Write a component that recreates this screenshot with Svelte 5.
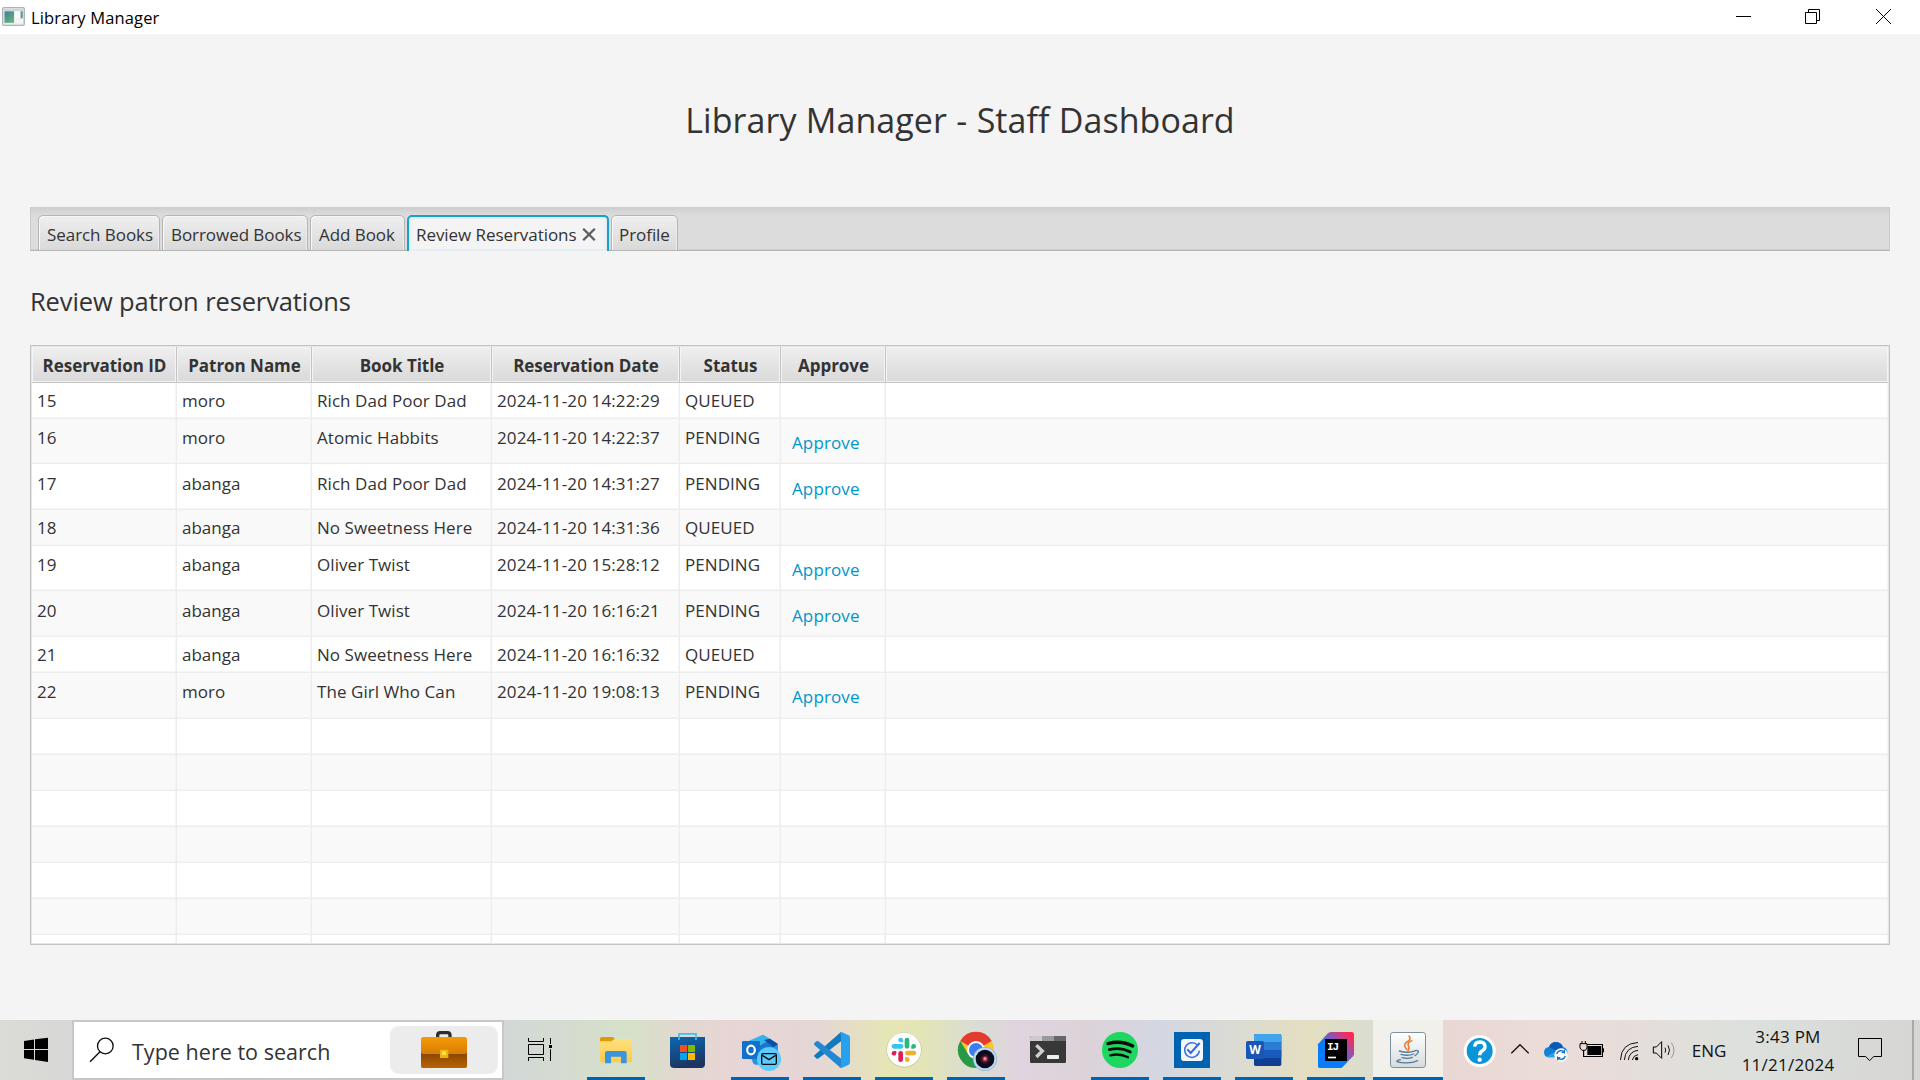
<script>
  const tabs = [
    { label: 'Search Books', cls: 't1' },
    { label: 'Borrowed Books', cls: 't2' },
    { label: 'Add Book', cls: 't3' },
    { label: 'Review Reservations', cls: 't4', active: true },
    { label: 'Profile', cls: 't5' },
  ];
  const columns = ['Reservation ID', 'Patron Name', 'Book Title', 'Reservation Date', 'Status', 'Approve'];
  const rows = [
    ['15', 'moro', 'Rich Dad Poor Dad', '2024-11-20 14:22:29', 'QUEUED'],
    ['16', 'moro', 'Atomic Habbits', '2024-11-20 14:22:37', 'PENDING'],
    ['17', 'abanga', 'Rich Dad Poor Dad', '2024-11-20 14:31:27', 'PENDING'],
    ['18', 'abanga', 'No Sweetness Here', '2024-11-20 14:31:36', 'QUEUED'],
    ['19', 'abanga', 'Oliver Twist', '2024-11-20 15:28:12', 'PENDING'],
    ['20', 'abanga', 'Oliver Twist', '2024-11-20 16:16:21', 'PENDING'],
    ['21', 'abanga', 'No Sweetness Here', '2024-11-20 16:16:32', 'QUEUED'],
    ['22', 'moro', 'The Girl Who Can', '2024-11-20 19:08:13', 'PENDING'],
  ];
  const rowClass = (i) => {
    if (rows[i][4] !== 'PENDING') return '';
    if (i === rows.length - 1) return 'tall end';
    return i > 0 && rows[i - 1][4] === 'PENDING' ? 'tall taller' : 'tall';
  };
  const blanks = [0, 1, 2, 3, 4, 5, 6];
</script>

<div class="screen">
  <header class="titlebar">
    <svg class="appicon" width="24" height="20" viewBox="0 0 24 20">
      <defs>
        <linearGradient id="appg" x1="0" y1="0" x2="0.6" y2="1"><stop offset="0" stop-color="#3f7f9c" /><stop offset="1" stop-color="#63b07f" /></linearGradient>
      </defs>
      <rect x="0.7" y="0.7" width="21.6" height="17.6" rx="1.2" fill="#eceef0" stroke="#adb3b8" stroke-width="1.3" />
      <rect x="2" y="2" width="19" height="2" fill="#cfd6da" />
      <rect x="2.5" y="4.3" width="9.5" height="11.5" fill="url(#appg)" />
      <rect x="13" y="4.3" width="5" height="7" fill="#fafafa" />
      <rect x="18.6" y="4.3" width="2.2" height="7" fill="#5c9b92" />
      <rect x="13" y="12" width="8" height="4" fill="#f4f4f4" />
    </svg>
    <span class="apptitle">Library Manager</span>
    <div class="winbtns">
      <svg width="70" height="34" viewBox="0 0 70 34"><path d="M26 16.5H41" stroke="#000" fill="none" /></svg>
      <svg width="70" height="34" viewBox="0 0 70 34"><path d="M25.5 12.5h11v11h-11zM28.5 12.5v-3h11v11h-3" stroke="#000" fill="none" /></svg>
      <svg width="70" height="34" viewBox="0 0 70 34"><path d="M26 9L41 24M41 9L26 24" stroke="#000" fill="none" /></svg>
    </div>
  </header>

  <main>
    <h1><span>Library Manager - Staff Dashboard</span></h1>
    <nav class="tabs">
      {#each tabs as t}
        <div class="tab {t.cls}" class:active={t.active}>
          <span>{t.label}</span>
          {#if t.active}
            <svg width="14" height="13" viewBox="0 0 14 13"><path d="M1.2 0.8L12.8 12.2M12.8 0.8L1.2 12.2" stroke="#5e5e5e" stroke-width="2.3" fill="none" /></svg>
          {/if}
        </div>
      {/each}
    </nav>
    <h2>Review patron reservations</h2>

    <div class="table">
      <div class="row head">
        {#each columns as c}<div class="hc">{c}</div>{/each}
        <div class="hc"></div>
      </div>
      <div class="body">
        {#each rows as r, i}
          <div class="row {rowClass(i)}" class:odd={i % 2 === 1}>
            {#each r as v, k}<div class="c k{k}">{v}</div>{/each}
            <div class="c link">{#if r[4] === 'PENDING'}<span>Approve</span>{/if}</div>
            <div class="c"></div>
          </div>
        {/each}
        {#each blanks as b}
          <div class="row" class:odd={b % 2 === 1}>
            {#each columns as _}<div class="c"></div>{/each}
            <div class="c"></div>
          </div>
        {/each}
      </div>
    </div>
  </main>

  <!-- Taskbar icons are drawn on a grid of three units to the pixel. -->
  <footer class="taskbar">
    <svg width="72" height="60" viewBox="0 0 216 180">
      <path d="M72 63L102 58.500V87H72zM105 58L144 53V87H105zM72 90H102V119L72 114.500zM105 90H144V126L105 120z" fill="#000" />
    </svg>

    <div class="search">
      <svg width="54" height="56" viewBox="0 0 162 168">
        <circle cx="94" cy="72" r="23.500" fill="none" stroke="#111" stroke-width="4" />
        <path d="M78 89L48 119" stroke="#111" stroke-width="4.200" fill="none" />
      </svg>
      <span>Type here to search</span>
      <div class="pill">
        <svg width="108" height="48" viewBox="0 0 324 144">
          <defs>
            <linearGradient id="bc1" x1="0" y1="0" x2="0" y2="1"><stop offset="0" stop-color="#f79a08" /><stop offset="1" stop-color="#d77c05" /></linearGradient>
            <linearGradient id="bc2" x1="0" y1="0" x2="0" y2="1"><stop offset="0" stop-color="#8f4a02" /><stop offset="0.5" stop-color="#8f4a02" /><stop offset="1" stop-color="#b86504" /></linearGradient>
          </defs>
          <path d="M143 34V28Q143 20 151 20H172Q180 20 180 28V34" stroke="#2d2d2f" stroke-width="10" fill="none" />
          <rect x="93" y="50" width="138" height="76" rx="5" fill="url(#bc2)" />
          <path d="M93 40Q93 33 100 33H224Q231 33 231 40V78Q231 84 225 84H99Q93 84 93 78z" fill="url(#bc1)" />
          <rect x="150" y="71" width="25" height="25" fill="#efb608" />
          <rect x="156" y="76" width="12" height="11" fill="#ffe34d" />
        </svg>
      </div>
    </div>

    <svg class="taskview" width="72" height="60" viewBox="0 0 216 180">
      <path d="M73.500 54V64.500H118.500V54M73.500 73.500H118.500V103.500H73.500zM73.500 123V112.500H118.500V123M139.500 54V72M139.500 88V123" fill="none" stroke="#000" stroke-width="3" />
      <rect x="135" y="75" width="9" height="9" fill="#000" />
    </svg>

    <div class="app run">
      <svg width="72" height="60" viewBox="0 0 216 180">
        <defs><linearGradient id="fo" x1="0" y1="0" x2="0" y2="1"><stop offset="0" stop-color="#ffe07e" /><stop offset="1" stop-color="#fbcb4c" /></linearGradient></defs>
        <path d="M60 56Q60 51 65 51H97Q100 51 102 54L106 60L98 66H60z" fill="#dd9c05" />
        <path d="M60 64H95L102 58H152Q156 58 156 62V122Q156 127 151 127H65Q60 127 60 122z" fill="url(#fo)" />
        <path d="M75 99Q75 93 81 93H134Q140 93 140 99V130H123V110H93V130H75z" fill="#3c94de" />
      </svg>
    </div>
    <div class="app">
      <svg width="72" height="60" viewBox="0 0 216 180">
        <defs><linearGradient id="st" x1="0" y1="0" x2="0.3" y2="1"><stop offset="0" stop-color="#0a68b4" /><stop offset="1" stop-color="#1d3560" /></linearGradient></defs>
        <path d="M54 51H159V132Q159 144 147 144H66Q54 144 54 132z" fill="url(#st)" />
        <path d="M81 60V41.500H132V60" fill="none" stroke="#32c5f4" stroke-width="5" />
        <rect x="84" y="75" width="21" height="21" fill="#f25022" /><rect x="108" y="75" width="21" height="21" fill="#7fba00" />
        <rect x="84" y="99" width="21" height="21" fill="#00a4ef" /><rect x="108" y="99" width="21" height="21" fill="#ffb900" />
      </svg>
    </div>
    <div class="app run">
      <svg width="72" height="60" viewBox="0 0 216 180">
        <path d="M75 66L117 45L161 72V118H75z" fill="#1a76c9" />
        <path d="M75 62L117 44L140 58L96 84z" fill="#35b3ee" />
        <path d="M120 60L138 56L161 71L150 82z" fill="#0b4fa3" />
        <path d="M84 116L130 92L161 74V125Q161 134 150 134H98Q84 134 84 116z" fill="#2793de" />
        <rect x="54" y="63" width="54" height="54" rx="4" fill="#1170cc" />
        <ellipse cx="81" cy="90" rx="11.500" ry="13" fill="none" stroke="#fff" stroke-width="6.500" />
        <circle cx="135" cy="117" r="36" fill="#5ccbff" />
        <rect x="113" y="101" width="44" height="32" rx="4" fill="none" stroke="#111" stroke-width="4" />
        <path d="M115 106L135 119L155 106" fill="none" stroke="#111" stroke-width="4" />
      </svg>
    </div>
    <div class="app run">
      <svg width="72" height="60" viewBox="0 0 216 180">
        <path d="M54 108L62 116Q66 117 69 114L140 60L135 36L56 105Q54 107 54 108z" fill="#1279be" />
        <path d="M54 72Q54 70 56 68L62 63Q66 62 69 65L137 117V144Q133 144 128 139L56 76Q54 74 54 72z" fill="#2388d1" />
        <path d="M128 41Q133 35 138 37L158 46Q162 48 162 53V127Q162 132 158 134L138 143Q132 145 128 139Q135 143 135 135V45Q135 37 128 41z" fill="#27a0ee" />
      </svg>
    </div>
    <div class="app run">
      <svg width="72" height="60" viewBox="0 0 216 180">
        <circle cx="108" cy="90" r="53" fill="#c9c9a8" /><circle cx="108" cy="89" r="51" fill="#fdfdfd" />
        <g stroke-width="14" stroke-linecap="round" fill="none">
          <path d="M78 79H99" stroke="#36c5f0" /><path d="M117 60V79" stroke="#2eb67d" />
          <path d="M118 99H138" stroke="#ecb22e" /><path d="M98 100V119" stroke="#e01e5a" />
        </g>
        <path d="M91 60A7 7 0 0 1 105 60V67H98A7 7 0 0 1 91 60z" fill="#36c5f0" />
        <path d="M130 86V79A7 7 0 1 1 137 86z" fill="#2eb67d" />
        <path d="M111 112H118A7 7 0 1 1 111 119z" fill="#ecb22e" />
        <path d="M85 93V100A7 7 0 1 1 78 93z" fill="#e01e5a" />
      </svg>
    </div>
    <div class="app run">
      <svg width="72" height="60" viewBox="0 0 216 180">
        <circle cx="108" cy="90" r="54" fill="#fdc629" />
        <path d="M108 90L61 63A54 54 0 0 1 155 63z" fill="#e33b2e" />
        <path d="M61 63A54 54 0 0 0 108 144L131 103L85 103z" fill="#269a48" />
        <circle cx="108" cy="90" r="27" fill="#fff" /><circle cx="108" cy="90" r="21" fill="#3b7ded" />
        <circle cx="135" cy="117" r="36" fill="#8fb2d0" /><circle cx="135" cy="117" r="34" fill="#bcd9f3" /><circle cx="135" cy="117" r="28" fill="#0b0b1c" />
        <circle cx="135" cy="117" r="15" fill="#2b1233" /><circle cx="135" cy="117" r="8" fill="#b43557" /><circle cx="135" cy="116" r="4" fill="#ff9a5c" />
      </svg>
    </div>
    <div class="app">
      <svg width="72" height="60" viewBox="0 0 216 180">
        <rect x="54" y="48" width="108" height="81" rx="4" fill="#383838" />
        <path d="M54 63V52Q54 48 58 48H90V63z" fill="#cbcbcb" /><rect x="90" y="48" width="36" height="15" fill="#999" /><path d="M126 48H158Q162 48 162 52V63H126z" fill="#666" />
        <path d="M73 76L91 93L73 111" fill="none" stroke="#cfcfcf" stroke-width="10" />
        <rect x="105" y="105" width="36" height="12" rx="2" fill="#efefef" />
      </svg>
    </div>
    <div class="app run">
      <svg width="72" height="60" viewBox="0 0 216 180">
        <circle cx="108" cy="90" r="54" fill="#1ed760" />
        <g fill="none" stroke="#0a0a0a" stroke-linecap="round"><path d="M72 71Q112 60 146 78" stroke-width="10" /><path d="M76 89Q110 80 139 96" stroke-width="8.500" /><path d="M79 106Q108 99 132 112" stroke-width="7" /></g>
      </svg>
    </div>
    <div class="app run">
      <svg width="72" height="60" viewBox="0 0 216 180">
        <rect x="54" y="36" width="108" height="108" fill="#0063b1" />
        <rect x="75" y="57" width="66" height="66" rx="10" fill="#f4f6fa" />
        <path d="M125 76A22 22 0 1 0 130 92" fill="none" stroke="#3b74e0" stroke-width="4.500" />
        <path d="M94 88L104 99L131 69" fill="none" stroke="#2f6be0" stroke-width="6" />
      </svg>
    </div>
    <div class="app run">
      <svg width="72" height="60" viewBox="0 0 216 180">
        <rect x="78" y="42" width="82" height="96" rx="5" fill="#103f91" />
        <path d="M78 66V47Q78 42 83 42H155Q160 42 160 47V66z" fill="#41a5ee" />
        <rect x="78" y="66" width="82" height="24" fill="#2b7cd3" /><rect x="78" y="90" width="82" height="24" fill="#185abd" />
        <rect x="54" y="63" width="54" height="54" rx="5" fill="#1b56b5" />
        <text x="81" y="102" text-anchor="middle" class="wordmark">W</text>
      </svg>
    </div>
    <div class="app run">
      <svg width="72" height="60" viewBox="0 0 216 180">
        <defs>
          <linearGradient id="ij" x1="0" y1="1" x2="1" y2="0"><stop offset="0.300" stop-color="#087cfa" /><stop offset="0.620" stop-color="#8a55b8" /><stop offset="0.900" stop-color="#fe2857" /></linearGradient>
        </defs>
        <path d="M54 73L82 41Q87 36 93 36H155Q162 36 162 43V102Q162 106 159 109L127 141Q124 144 120 144H61Q54 144 54 137z" fill="url(#ij)" />
        <path d="M54 73L75 57V123H141V127L127 141Q124 144 120 144H61Q54 144 54 137z" fill="#087cfa" />
        <rect x="75" y="57" width="66" height="66" fill="#000" />
        <text x="81" y="90" class="ijmark">IJ</text>
        <rect x="84" y="110" width="24" height="5" fill="#fff" />
      </svg>
    </div>
    <div class="app run current">
      <svg width="70" height="60" viewBox="3 0 210 180">
        <defs><linearGradient id="jv" x1="0" y1="0" x2="0" y2="1"><stop offset="0" stop-color="#fff" /><stop offset="1" stop-color="#d6dbdf" /></linearGradient></defs>
        <rect x="55.500" y="37.500" width="105" height="105" rx="8" fill="url(#jv)" stroke="#7d909c" stroke-width="3" />
        <g fill="none" stroke="#e8792b" stroke-width="4.500" stroke-linecap="round"><path d="M111 48Q120 57 105 66Q91 75 104 88" /><path d="M120 62Q105 68 109 77Q114 84 108 92" /></g>
        <g fill="none" stroke="#537b97" stroke-width="4" stroke-linecap="round"><path d="M82 93Q107 101 131 92" /><path d="M87 103Q108 109 125 102" /><path d="M90 113Q107 118 121 112" /><path d="M132 91Q148 92 129 107" /><path d="M85 119Q62 125 90 128Q118 131 137 122" /></g>
      </svg>
    </div>

    <div class="tray">
      <svg width="60" height="60" viewBox="0 0 180 180">
        <circle cx="107" cy="93" r="48" fill="#fff" /><circle cx="107" cy="93" r="39" fill="#0a95d8" />
        <path d="M92 80Q93 66 108 66Q123 67 123 80Q123 88 114 93Q107 97 107 106" fill="none" stroke="#fff" stroke-width="10" /><circle cx="107" cy="119" r="6.500" fill="#fff" />
      </svg>
      <svg width="32" height="60" viewBox="0 0 96 180"><path d="M22 100L48 74L74 100" fill="none" stroke="#111" stroke-width="4" /></svg>
      <svg width="36" height="60" viewBox="0 0 108 180">
        <path d="M37 112Q24 110 24 96Q25 83 39 81Q45 66 60 66Q76 67 81 81Q94 84 94 98Q94 112 82 112z" fill="#1481d7" />
        <path d="M39 81Q45 66 60 66Q76 67 81 81L64 94z" fill="#0b5bb5" /><path d="M30 110L64 92L90 110L80 112H37z" fill="#2ba2ea" />
        <circle cx="75" cy="105" r="20" fill="#fff" />
        <path d="M62 102A13 13 0 0 1 85 97V89M85 97H77M88 108A13 13 0 0 1 65 113V121M65 113H73" fill="none" stroke="#1672c4" stroke-width="4" />
      </svg>
      <svg width="40" height="60" viewBox="0 0 120 180">
        <rect x="34.500" y="73.500" width="57" height="36" fill="none" stroke="#000" stroke-width="3" /><rect x="46" y="78" width="42" height="27" fill="#000" /><rect x="92" y="85" width="4" height="12" fill="#000" />
        <path d="M24 71H45V84L40 91H30L24 84z" fill="#ecdcd8" stroke="#000" stroke-width="3" /><path d="M30 63V71M40 63V71M35 91V109" stroke="#000" stroke-width="3" />
      </svg>
      <svg width="34" height="60" viewBox="0 0 102 180">
        <g fill="none" stroke="#111" stroke-width="3"><path d="M25.500 120Q27 70 78 67.500" /><path d="M37 120Q40 82 78 79" /><path d="M49 120Q52 94 78 91" /><path d="M61 120Q64 106 78 104" /></g><circle cx="74" cy="116" r="5" fill="#000" />
      </svg>
      <svg width="38" height="60" viewBox="0 0 114 180">
        <path d="M22 81H31L47 65V115L31 99H22z" fill="none" stroke="#000" stroke-width="3" />
        <path d="M57 83Q61 90 57 98M66 76Q75 90 66 105" fill="none" stroke="#111" stroke-width="3" /><path d="M76 68Q92 90 76 114" fill="none" stroke="#999" stroke-width="3" />
      </svg>
      <span class="lang">ENG</span>
      <div class="clock"><span class="time">3:43 PM</span><span class="date">11/21/2024</span></div>
      <svg width="52" height="60" viewBox="0 0 156 180"><path d="M43.500 55.500H112.500V109.500H89L77 122L65 109.500H43.500z" fill="none" stroke="#000" stroke-width="3" /></svg>
      <div class="peek"></div>
    </div>
  </footer>
</div>

<style>
  :global(body) { margin: 0; overflow: hidden; }
  .screen {
    width: 1920px; height: 1080px; display: flex; flex-direction: column; background: #f4f4f4;
    font-family: "Open Sans", "Noto Sans", sans-serif; font-size: 17px; color: #333; white-space: nowrap; overflow: hidden;
  }
  svg { display: block; flex: none; }
  .titlebar { height: 34px; display: flex; background: #fff; box-sizing: border-box; padding-left: 2px; }
  .appicon { margin-top: 7px; }
  .apptitle { margin-left: 5px; line-height: 35px; color: #000; font-size: 16.5px; letter-spacing: 0.14px; }
  .winbtns { display: flex; margin-left: auto; }

  main { flex: 1; display: flex; flex-direction: column; padding: 0 30px; }
  h1 { margin: 0; height: 173px; box-sizing: border-box; padding-bottom: 2px; display: flex; align-items: center; justify-content: center; font-weight: 400; font-size: 34px; letter-spacing: 0.05px; word-spacing: 0.5px; }
  .tabs {
    height: 44px; box-sizing: border-box; display: flex; align-items: flex-end; padding-left: 8px; gap: 2px;
    background: linear-gradient(#cdcdcd, #dcdcdc 8px); box-shadow: inset 0 -1px #b5b5b5, inset 0 -2px #cecece, inset -1px 0 #ccc, inset 1px 0 #ccc;
  }
  .tab {
    height: 36px; box-sizing: border-box; border: 1px solid #b5b5b5; border-radius: 5px 5px 0 0; padding: 2px 0 0 8px;
    display: flex; align-items: center; background: linear-gradient(#efefef, #d9d9d9); box-shadow: inset 1px 1px #f7f7f7, inset -1px 0 #ececec; letter-spacing: -0.06px;
  }
  .tab.active { background: #f4f4f4; border: 2px solid #1a9fcf; border-bottom: 0; box-shadow: inset 0 0 0 2px #e3eff4; padding: 0 0 0 7px; gap: 5px; }
  .tab.active svg { margin-top: 1px; }
  .t1 { width: 122px; } .t2 { width: 146px; } .t3 { width: 95px; } .t4 { width: 202px; } .t5 { width: 67px; padding-left: 7px; }
  h2 { margin: 0; height: 94px; box-sizing: border-box; padding-top: 6px; line-height: 89px; font-size: 25.5px; font-weight: 400; letter-spacing: -0.12px; }

  .table { height: 600px; box-sizing: border-box; border: 1px solid #c3c3c3; background: #fff; padding: 1px; display: flex; flex-direction: column; box-shadow: inset 0 0 0 1px #e6e6e6; }
  .body { flex: 1; overflow: hidden; min-height: 0; }
  .row { display: grid; grid-template-columns: 145px 135px 180px 188px 101px 105px 1fr; height: 36px; background: #fff; }
  .hc {
    border-right: 1px solid #c3c3c3; border-bottom: 1px solid #c3c3c3; padding: 3px 0 0 1px; text-align: center; font-weight: 700; line-height: 32px; letter-spacing: -0.04px;
    background: linear-gradient(#efefef, #d9d9d9); box-shadow: inset 0 0 0 1px #f4f4f4;
  }
  .hc:last-child { border-right: 0; }
  .head { flex: none; }
  .c { border-right: 1px solid #ededed; border-bottom: 1px solid #ededed; box-shadow: inset -1px -1px #f5f5f5; padding-left: 5px; line-height: 35px; overflow: hidden; }
  .c:last-child { border-right: 0; }
  .k2, .k4 { letter-spacing: 0.06px; }
  .k3 { letter-spacing: 0.13px; }
  .odd { background: #f9f9f9; }
  .tall { height: 45px; }
  .tall .c { padding-top: 1px; }
  .taller, .end { height: 46px; }
  .taller .c { padding-top: 2px; }
  .link { color: #0096c9; padding-left: 11px; letter-spacing: 0.12px; }
  .tall .link { padding-top: 6px; }
  .taller .link { padding-top: 7px; }

  .taskbar {
    height: 60px; display: flex; flex: none;
    background: linear-gradient(90deg, #dbdbd7 0, #d8d9d6 60px, #d2d8d8 500px, #d5dccf 570px, #d6e1c9 630px, #e2d8d0 680px, #e8d5d5 740px, #e4d7d5 820px, #e6e6b4 890px, #e3e5b6 920px, #d9dcd6 980px, #e0d4de 1020px, #dcd3d9 1090px, #d3d7e2 1160px, #dcdcd0 1250px, #e4dfc0 1310px, #dbddd0 1370px, #e8d7d3 1445px, #ecdcd8 1540px, #e3dedb 1660px, #dce1dd 1750px, #d8d9d7 1860px, #d6d6d4 1920px);
  }
  .search { width: 432px; box-sizing: border-box; border: 2px solid #c8c8c8; background: #fff; display: flex; align-items: center; font-size: 21.5px; }
  .search span { margin-left: 4px; padding-top: 2px; letter-spacing: 0.03px; }
  .pill { width: 108px; height: 48px; border-radius: 9px; background: #ececec; margin-left: auto; margin-right: 4px; }
  .taskview { margin-right: 4px; }
  .app { width: 72px; display: flex; justify-content: center; box-sizing: border-box; }
  .run { background: linear-gradient(#0063b1, #0063b1) 7px 57px / 58px 3px no-repeat; }
  .current { width: 70px; margin: 0 1px; background: linear-gradient(#0063b1, #0063b1) 0 57px / 70px 3px no-repeat, #f1f0ea; }
  .wordmark { font: 700 36px "Open Sans", sans-serif; fill: #fff; }
  .ijmark { font: 700 33px "Liberation Mono", monospace; fill: #fff; letter-spacing: -3px; }
  .tray { flex: 1; display: flex; color: #111; }
  .lang { width: 50px; text-align: center; line-height: 61px; }
  .clock { width: 110px; box-sizing: border-box; display: flex; flex-direction: column; align-items: center; padding: 3px 2px 0 0; letter-spacing: 0.25px; }
  .clock span { line-height: 28px; }
  .peek { margin-left: 16px; width: 6px; border-left: 2px solid #a9a9a9; }
</style>
